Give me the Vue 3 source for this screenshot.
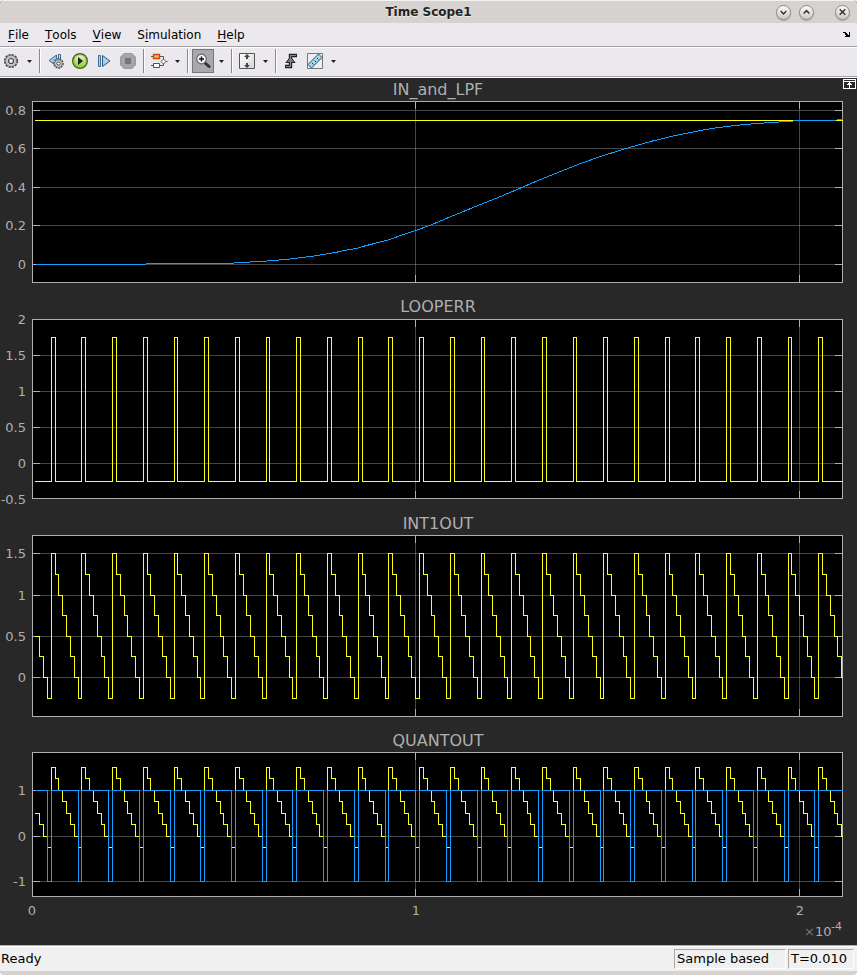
<script setup>
const LEFT = 32
const RIGHT = 842
const STEP = 3.838
const SAMPLES = 211

const menus = [
  { key: 'F', before: '', after: 'ile' },
  { key: 'T', before: '', after: 'ools' },
  { key: 'V', before: '', after: 'iew' },
  { key: 'i', before: 'S', after: 'mulation' },
  { key: 'H', before: '', after: 'elp' },
]

// Integrator output: a sawtooth falling in quarter steps, reset every 8 samples.
const integrator = Array.from({ length: SAMPLES }, (_, n) => 1.5 - (((n + 4) % 8) * 0.25))
const loopError = integrator.map((v) => (v === 1.5 ? 1.75 : -0.25))
const quantizer = integrator.map((v) => (v < 0 ? -1 : 1))

function stairs(values, origin, scale) {
  const px = (n) => Math.floor(LEFT + (n + 1) * STEP) + 0.5
  const py = (v) => Math.floor(origin - v * scale) + 0.5
  let d = `M${px(0) - 0.5} ${py(values[0])}`
  for (let n = 1; n < values.length; n++) d += `H${px(n)}V${py(values[n])}`
  return `${d}H${RIGHT + 0.5}`
}

const lowPass = [
  [35, 164], [145, 164], [146, 163], [228, 163], [240, 162], [260, 161], [273, 160], [285, 159],
  [294, 158], [302, 157], [310, 156], [317, 155], [323, 154], [329, 153], [335, 152], [339, 151],
  [344, 150], [350, 149], [356, 148], [362, 146], [374, 143], [389, 139], [403, 134], [415, 130],
  [429, 125], [453, 115], [480, 104], [500, 96], [520, 87.5], [540, 79], [560, 71], [580, 63],
  [600, 56], [622, 49], [650, 41], [675, 35], [700, 30], [718, 27], [735, 25], [745, 24],
  [757, 23], [770, 22], [787, 21], [798, 20], [836, 20], [837, 19], [842, 19],
]
  .map(([x, y]) => `${x + 0.5},${y + 0.5}`)
  .join(' ')

const panels = [
  {
    title: 'IN_and_LPF', top: 1, bottom: 182, height: 197, curve: true,
    ticks: [['0.8', 10], ['0.6', 48], ['0.4', 87], ['0.2', 125], ['0', 164]],
    traces: [],
  },
  {
    title: 'LOOPERR', top: 2, bottom: 181, height: 197,
    ticks: [['2', 2], ['1.5', 38], ['1', 74], ['0.5', 110], ['0', 146], ['-0.5', 182]],
    traces: [{ tone: 'yellow', d: stairs(loopError, 146.1, 72) }],
  },
  {
    title: 'INT1OUT', top: 1, bottom: 182, height: 197,
    ticks: [['1.5', 19], ['1', 61], ['0.5', 102], ['0', 143]],
    traces: [{ tone: 'yellow', d: stairs(integrator, 143.55, 82.5) }],
  },
  {
    title: 'QUANTOUT', top: 1, bottom: 145, height: 194, last: true,
    ticks: [['1', 39], ['0', 85], ['-1', 130]],
    traces: [
      { tone: 'yellow', d: stairs(integrator, 85.1, 45.7) },
      { tone: 'blue', d: stairs(quantizer, 85.1, 45.7) },
    ],
  },
]
const inner = (p) => p.ticks.filter(([, y]) => y > p.top && y < p.bottom)
</script>

<template>
  <div class="window">
    <header class="titlebar">
      <h1>Time Scope1</h1>
      <div class="controls">
        <button aria-label="Minimize"><svg viewBox="0 0 16 16"><path d="M5 6.5l3 3 3-3" /></svg></button>
        <button aria-label="Maximize"><svg viewBox="0 0 16 16"><path d="M5 9l3-3 3 3" /></svg></button>
        <button class="close" aria-label="Close"><svg viewBox="0 0 16 16"><path d="M5 4.5l6 6M11 4.5l-6 6" /></svg></button>
      </div>
    </header>

    <nav class="menubar">
      <button v-for="m in menus" :key="m.after">{{ m.before }}<u>{{ m.key }}</u>{{ m.after }}</button>
      <button class="dock" aria-label="Dock">
        <svg width="8" height="7" viewBox="0 0 8 7" shape-rendering="crispEdges"><path d="M0 1h3v1h1v1h1v1h1V1h1v5H2V5h1V4H2V2H0z" /></svg>
      </button>
    </nav>

    <div class="toolbar">
      <div class="group flush">
        <button aria-label="Configuration">
          <svg width="16" height="16" viewBox="0 0 16 16">
            <circle cx="8" cy="8" r="6.3" fill="none" stroke="#444" stroke-width="1.6" stroke-dasharray="2.2 1.1" />
            <circle cx="8" cy="8" r="4.6" fill="#ddd" stroke="#bbb" stroke-width="2" />
            <circle cx="8" cy="8" r="5.8" fill="none" stroke="#666" stroke-width=".8" />
            <circle cx="8" cy="8" r="2.5" fill="#eee" stroke="#444" stroke-width="1.2" />
          </svg>
        </button>
        <button class="drop" aria-label="Configuration options"><svg width="5" height="3" viewBox="0 0 5 3"><path d="M0 0h5L2.5 3z" /></svg></button>
      </div>
      <i class="sep"></i>
      <div class="group">
        <button aria-label="Step back options">
          <svg width="16" height="16" viewBox="0 0 16 16">
            <path d="M8.5 2v11L1 7.500z" fill="#9dc4e4" stroke="#3d6c93" />
            <path d="M10.500 1.500h2v6h-2z" fill="#c4def2" stroke="#3d6c93" />
            <circle cx="10.500" cy="10.500" r="4.500" fill="#ddd" stroke="#444" stroke-width="1.500" stroke-dasharray="1.800 .9" />
            <circle cx="10.500" cy="10.500" r="3.800" fill="#ddd" stroke="#777" />
            <circle cx="10.500" cy="10.500" r="1.700" fill="#fff" stroke="#333" />
          </svg>
        </button>
        <button aria-label="Run">
          <svg width="18" height="18" viewBox="0 0 18 18">
            <defs><linearGradient id="run" x2="0" y2="1"><stop stop-color="#f4fbe4" /><stop offset=".55" stop-color="#b8e070" /><stop offset="1" stop-color="#8fce35" /></linearGradient></defs>
            <circle cx="9" cy="9" r="7.300" fill="url(#run)" stroke="#3e6b1c" stroke-width="1.400" />
            <circle cx="9" cy="9" r="6" fill="none" stroke="#86bd3f" stroke-width=".8" />
            <path d="M7 5l5 4-5 4z" fill="#222" />
          </svg>
        </button>
        <button aria-label="Step forward">
          <svg width="14" height="14" viewBox="0 0 14 14">
            <path d="M1.500 1.500h2v11h-2z" fill="#b5d4ec" stroke="#3d6c93" />
            <path d="M5.500 1.500v11l7.500-5.500z" fill="#a9cfed" stroke="#2f5b82" />
          </svg>
        </button>
        <button aria-label="Stop" disabled>
          <svg width="16" height="16" viewBox="0 0 16 16">
            <path d="M4 0h8l4 4v8l-4 4H4l-4-4V4z" fill="#9b9b9b" /><path d="M4 1h8l3 3v8l-3 3H4l-3-3V4z" fill="#a5a5a5" />
            <path d="M5 5h6v6H5z" fill="#777" />
          </svg>
        </button>
      </div>
      <i class="sep"></i>
      <div class="group flush">
        <button aria-label="Highlight block">
          <svg width="17" height="16" viewBox="0 0 17 16">
            <path d="M0 3.500h2M9 3.500h3.500v3M0 12.500h2M9 12.500h3.500v-2M14.500 8.500h2" fill="none" stroke="#555" />
            <path d="M2.500 1.500h6v4h-6z" fill="#f9b06c" stroke="#cf4a08" stroke-width="1.400" />
            <path d="M2.500 10.500h6v4h-6z" fill="#fff" stroke="#555" />
            <path d="M12.500 6l2.500 2.500-2.500 2.500L10 8.500z" fill="#fff" stroke="#555" />
          </svg>
        </button>
        <button class="drop" aria-label="Highlight options"><svg width="5" height="3" viewBox="0 0 5 3"><path d="M0 0h5L2.5 3z" /></svg></button>
      </div>
      <i class="sep"></i>
      <div class="group flush">
        <button class="pressed" aria-label="Zoom" aria-pressed="true">
          <svg width="16" height="16" viewBox="0 0 16 16">
            <path d="M9.500 9.500l4.500 4" stroke="#333" stroke-width="3" stroke-linecap="round" />
            <circle cx="6.500" cy="6" r="4.800" fill="#f2f6f8" stroke="#666" stroke-width="1.200" />
            <path d="M4 6h5M6.500 3.500v5" stroke="#111" stroke-width="1.400" />
          </svg>
        </button>
        <button class="drop" aria-label="Zoom options"><svg width="5" height="3" viewBox="0 0 5 3"><path d="M0 0h5L2.5 3z" /></svg></button>
      </div>
      <i class="sep"></i>
      <div class="group flush">
        <button aria-label="Scale axes">
          <svg width="16" height="16" viewBox="0 0 16 16">
            <defs><linearGradient id="fit" x2="1" y2="1"><stop stop-color="#fff" /><stop offset="1" stop-color="#d4d4d4" /></linearGradient></defs>
            <path d="M.5.5h15v15H.5z" fill="url(#fit)" stroke="#555" />
            <path d="M8 1l3 3H9v2H7V4H5zM8 15l3-3H9v-2H7v2H5z" fill="#444" />
          </svg>
        </button>
        <button class="drop" aria-label="Scale options"><svg width="5" height="3" viewBox="0 0 5 3"><path d="M0 0h5L2.5 3z" /></svg></button>
      </div>
      <i class="sep"></i>
      <div class="group flush">
        <button aria-label="Triggers">
          <svg width="14" height="16" viewBox="0 0 14 16">
            <path d="M1 13.500h5.500v-11H13" fill="none" stroke="#222" stroke-width="3.400" />
            <path d="M6.500 4l4.500 5.500H2z" fill="#777" stroke="#222" />
            <path d="M2 13.500h4.500v-11H12" fill="none" stroke="#888" stroke-width="1.200" />
          </svg>
        </button>
        <button aria-label="Measurements">
          <svg width="16" height="16" viewBox="0 0 16 16">
            <path d="M.5.5h15v15H.5z" fill="#eee" stroke="#777" />
            <path d="M1 11.500L11.500 1l3.500 3.500L4.500 15z" fill="#a9d5ef" stroke="#244d6b" />
            <path d="M5 10l1.500 1.500M7.500 7.500L9 9M10 5l1.500 1.500" stroke="#16364e" />
          </svg>
        </button>
        <button class="drop" aria-label="Measurement options"><svg width="5" height="3" viewBox="0 0 5 3"><path d="M0 0h5L2.5 3z" /></svg></button>
      </div>
    </div>

    <main class="scope">
      <button class="expand" aria-label="Maximize axes">
        <svg width="13" height="10" viewBox="0 0 13 10" shape-rendering="crispEdges">
          <path d="M.5.5h12v9H.5zM0 2.500h13" fill="none" stroke="#fff" />
          <path d="M6 3h1v1h1v1h1v1H7v3H6V6H4V5h1V4h1z" fill="#fff" />
        </svg>
      </button>
      <section v-for="p in panels" :key="p.title" class="panel">
        <h2>{{ p.title }}</h2>
        <svg :viewBox="`0 0 857 ${p.height}`" role="img" :aria-label="p.title">
          <g shape-rendering="crispEdges" fill="none">
            <rect :x="LEFT" :y="p.top" :width="RIGHT - LEFT" :height="p.bottom - p.top" fill="#000" />
            <g class="grid">
              <path v-for="t in inner(p)" :key="t[0]" :d="`M${LEFT} ${t[1] + 0.5}H${RIGHT}`" />
              <path :d="`M415.5 ${p.top}V${p.bottom}M799.5 ${p.top}V${p.bottom}`" />
            </g>
            <g class="axis">
              <path v-for="t in inner(p)" :key="t[0]" :d="`M${LEFT} ${t[1] + 0.5}h8M${RIGHT + 1} ${t[1] + 0.5}h-8`" />
              <path v-for="x in [415.5, 799.5]" :key="x" :d="`M${x} ${p.top}v8M${x} ${p.bottom + 1}v-8`" />
              <rect :x="LEFT + 0.5" :y="p.top + 0.5" :width="RIGHT - LEFT" :height="p.bottom - p.top" />
            </g>
            <template v-if="p.curve">
              <path class="yellow" d="M35 20.5H797" />
              <polyline class="blue" :points="lowPass" />
              <path class="yellow" d="M836 20.5H843" />
            </template>
            <path v-for="t in p.traces" :key="t.tone" :class="t.tone" :d="t.d" />
          </g>
          <g class="labels">
            <text v-for="t in p.ticks" :key="t[0]" x="26" :y="t[1] + 5" text-anchor="end">{{ t[0] }}</text>
            <template v-if="p.last">
              <text v-for="(x, i) in [32, 416, 800]" :key="x" :x="x" y="164" text-anchor="middle">{{ i }}</text>
              <text x="804" y="185" class="times">×</text>
              <text x="815" y="185">10</text>
              <text x="831" y="179" class="power">-4</text>
            </template>
          </g>
        </svg>
      </section>
    </main>

    <footer class="status">
      <span class="ready">Ready</span>
      <span class="cell mode">Sample based</span>
      <span class="cell time">T=0.010</span>
    </footer>
  </div>
</template>

<style>
body {
  margin: 0;
  background: #fff;
}
</style>

<style scoped>
.window {
  display: flex;
  flex-direction: column;
  min-height: 100vh;
  box-sizing: border-box;
  border-bottom: 4px solid #d6d2d0;
  border-radius: 4px;
  overflow: hidden;
  background: #282828;
  font-family: "DejaVu Sans", sans-serif;
  font-size: 13px;
  color: #000;
}
button {
  display: flex;
  align-items: center;
  justify-content: center;
  padding: 0;
  border: 0;
  background: none;
  font: inherit;
  color: inherit;
}
.titlebar {
  display: grid;
  grid-template-columns: 1fr auto 1fr;
  align-items: center;
  height: 23px;
  box-sizing: border-box;
  border-top: 1px solid #f5f3f2;
  background: #d6d2d0;
}
h1 {
  grid-column: 2;
  margin: 0;
  font-size: 12px;
  line-height: 20px;
  color: #222;
  text-shadow: 0 1px 0 #eee;
}
.controls {
  display: flex;
  justify-content: flex-end;
  gap: 8px;
  padding-right: 7px;
}
.controls button {
  width: 15px;
  height: 15px;
  box-sizing: border-box;
  border: 1px solid #8d8a88;
  border-radius: 50%;
  background: linear-gradient(#fbfbfa, #ccc9c6);
  box-shadow: 0 1px 1px #aaa6a3;
}
.controls .close {
  margin-left: 13px;
}
.controls svg {
  flex: none;
  width: 15px;
  height: 15px;
  fill: none;
  stroke: #333;
  stroke-width: 1.6;
}
.menubar {
  display: flex;
  align-items: center;
  gap: 16px;
  height: 23px;
  padding: 0 6px 0 8px;
  border-bottom: 1px solid #a2a0a4;
  background: #ebe9ed;
  font-size: 12px;
}
.menubar u {
  text-underline-offset: 2px;
}
.dock {
  margin-left: auto;
}
.toolbar {
  display: flex;
  align-items: center;
  height: 26px;
  padding-bottom: 2px;
  border-top: 1px solid #fff;
  border-bottom: 1px solid #a2a0a4;
  box-shadow: 0 1px 0 #fff;
  margin-bottom: 1px;
  background: #ebe9ed;
}
.group {
  display: flex;
  align-items: center;
  gap: 2px;
  padding: 0 1px;
}
.group.flush {
  padding: 0;
}
.group button {
  width: 22px;
  height: 24px;
}
.group .drop {
  width: 14px;
  margin-left: -2px;
  fill: #222;
}
.group .pressed {
  box-sizing: border-box;
  border: 1px solid #77767a;
  background: #a9a8ac;
}
.sep {
  width: 1px;
  height: 24px;
  margin: 0 3px;
  border-right: 1px solid #fff;
  background: #8a898d;
}
.scope {
  position: relative;
  flex: 1;
  padding-top: 2px;
}
.expand {
  position: absolute;
  top: 1px;
  right: 1px;
}
.panel h2 {
  margin: 0;
  padding-left: 19px;
  font-size: 16px;
  font-weight: 400;
  line-height: 20px;
  text-align: center;
  color: #afafaf;
}
.panel > svg {
  display: block;
  width: 100%;
  overflow: visible;
}
.grid {
  stroke: rgba(175, 175, 175, 0.4);
}
.axis {
  stroke: #afafaf;
}
.yellow {
  stroke: #ffff11;
}
.blue {
  stroke: #139fff;
}
.labels {
  font-size: 13px;
  fill: #afafaf;
}
.labels .times {
  fill: #777;
}
.labels .power {
  font-size: 11px;
}
.status {
  display: flex;
  align-items: center;
  gap: 2px;
  height: 25px;
  padding-right: 3px;
  border-top: 1px solid #b0b0b0;
  box-shadow: inset 0 1px 0 #fff;
  background: #f0f0f0;
}
.ready {
  flex: 1;
  padding-left: 1px;
}
.cell {
  box-sizing: border-box;
  height: 20px;
  padding-left: 2px;
  border: 1px solid;
  border-color: #a8a8a8 #fff #fff #a8a8a8;
  line-height: 18px;
}
.mode {
  width: 112px;
}
.time {
  width: 66px;
}
</style>
